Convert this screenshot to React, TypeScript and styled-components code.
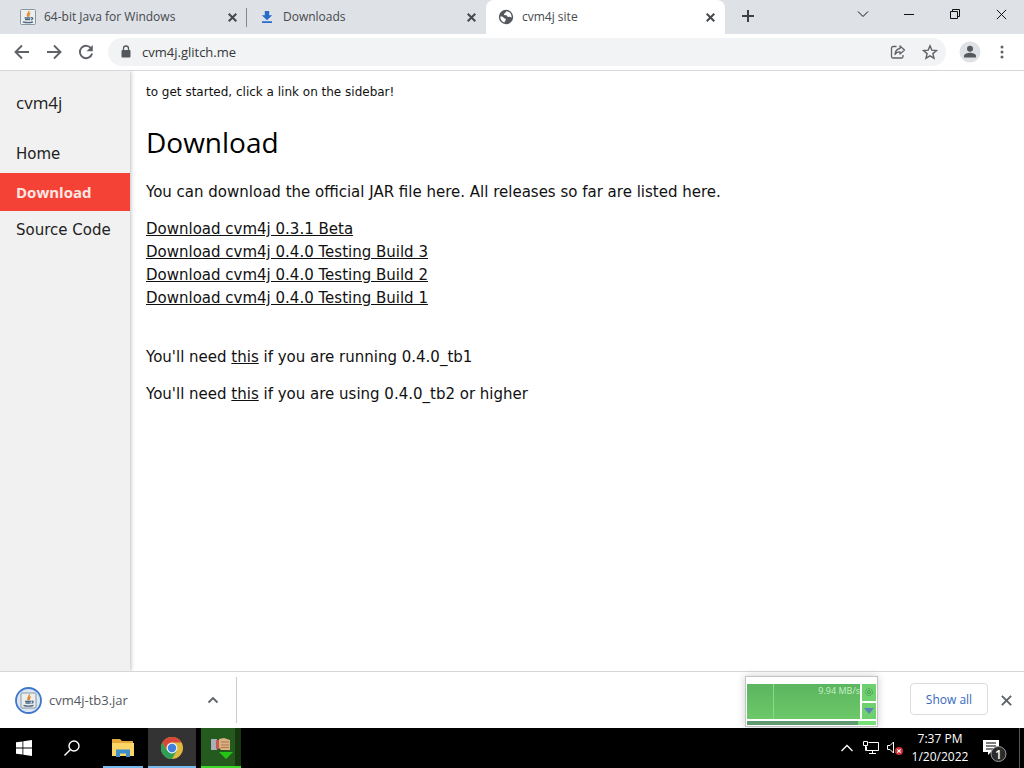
import React from 'react';
import styled, { createGlobalStyle } from 'styled-components';

const UI = '"Open Sans", "Noto Sans", sans-serif';
const VERDANA = 'Verdana, "DejaVu Sans", sans-serif';

const Global = createGlobalStyle`
  * { box-sizing: border-box; }
  body { margin: 0; background: #fff; font-family: ${UI}; }
  button { border: 0; padding: 0; background: none; font-family: inherit; cursor: pointer; }
  svg { display: block; flex: none; }
`;

const Screen = styled.div`
  min-height: 100vh;
  display: flex;
  flex-direction: column;
`;

const TabStrip = styled.header`
  display: flex;
  align-items: stretch;
  height: 34px;
  padding-left: 8px;
  background: #dee1e6;
`;

const Tab = styled.div<{ $active?: boolean; $divider?: boolean }>`
  position: relative;
  flex: 0 1 239px;
  min-width: 0;
  display: flex;
  align-items: center;
  gap: 8px;
  padding: 0 10px 0 12px;
  border-radius: 8px 8px 0 0;
  background: ${(p) => (p.$active ? '#fff' : 'transparent')};
  ${(p) => p.$divider && `&::after {
    content: '';
    position: absolute;
    right: 0;
    top: 8px;
    width: 1px;
    height: 19px;
    background: #84878c;
  }`}
`;

const TabTitle = styled.span`
  flex: 1;
  min-width: 0;
  overflow: hidden;
  white-space: nowrap;
  font-size: 12px;
  line-height: 20px;
  color: #45494d;
`;

const IconButton = styled.button<{ $w?: number; $h?: number }>`
  flex: none;
  display: flex;
  align-items: center;
  justify-content: center;
  width: ${(p) => p.$w ?? 32}px;
  height: ${(p) => p.$h ?? 32}px;
  color: #5f6368;
`;

const TabClose = styled(IconButton)`
  color: #45494d;
`;

const NewTab = styled(IconButton)`
  margin-left: 7px;
  color: #3c4043;
`;

const WindowControls = styled.div`
  display: flex;
  margin-left: auto;
  button { color: #111; }
`;

const Toolbar = styled.div`
  display: flex;
  align-items: center;
  height: 37px;
  padding: 0 6px;
  background: #fff;
  border-bottom: 1px solid #d5d7da;
`;

const AddressBar = styled.div`
  flex: 1;
  min-width: 0;
  display: flex;
  align-items: center;
  height: 28px;
  margin: 0 8px 0 6px;
  padding-left: 13px;
  border-radius: 14px;
  background: #f1f3f4;
`;

const Address = styled.input`
  flex: 1;
  min-width: 0;
  margin-left: 11px;
  padding: 0;
  border: 0;
  outline: 0;
  background: none;
  font: 13px/20px ${UI};
  color: #35383b;
`;

const Viewport = styled.div`
  flex: 1;
  display: flex;
  background: #fff;
`;

const Sidebar = styled.nav`
  flex: none;
  width: 130px;
  background: #f1f1f1;
  box-shadow: 1px 0 4px rgba(0, 0, 0, 0.25);
  clip-path: inset(0 -8px 0 0);
`;

const SiteName = styled.h4`
  margin: 0;
  padding: 17px 16px 18px;
  font: 400 17px/29px ${UI};
  color: #222;
`;

const SideLink = styled.a<{ $active?: boolean }>`
  display: block;
  padding: 8px 16px;
  font-family: ${(p) => (p.$active ? UI : VERDANA)};
  font-size: 15px;
  font-weight: ${(p) => (p.$active ? 700 : 400)};
  line-height: 22px;
  white-space: nowrap;
  text-decoration: none;
  color: ${(p) => (p.$active ? '#ffe6e3' : '#222')};
  background: ${(p) => (p.$active ? '#f44336' : 'transparent')};
`;

const Content = styled.main`
  flex: 1;
  min-width: 0;
  padding: 10px 16px;
  font: 15px/23px ${VERDANA};
  color: #111;
  p { margin: 0 0 14px; }
  a { color: inherit; }
`;

const Hint = styled.div`
  font-size: 12px;
  line-height: 22px;
`;

const Title = styled.h2`
  margin: 17px 0 16px;
  font: 400 28px/45px ${UI};
  color: #000;
`;

const Releases = styled.div`
  display: flex;
  flex-direction: column;
  align-items: flex-start;
  margin-bottom: 36px;
`;

const Shelf = styled.footer`
  position: relative;
  display: flex;
  align-items: center;
  height: 57px;
  padding-right: 2px;
  background: #fff;
  border-top: 1px solid #d5d7da;
`;

const DownloadItem = styled.div`
  flex: 0 1 237px;
  display: flex;
  align-items: center;
  height: 46px;
  padding: 0 7px 0 15px;
  border-right: 1px solid #c8cacd;
`;

const FileName = styled.span`
  flex: 1;
  margin-left: 7px;
  font-size: 13px;
  line-height: 20px;
  color: #55595d;
`;

const ShowAll = styled.button`
  width: 78px;
  height: 32px;
  margin: 0 2px 2px auto;
  border: 1px solid #dadce0;
  border-radius: 4px;
  font-size: 12px;
  font-weight: 500;
  color: #3567bd;
`;

const Meter = styled.div`
  position: absolute;
  right: 146px;
  top: 4px;
  width: 133px;
  height: 51px;
  padding: 7px 1px 1px;
  display: grid;
  grid-template: 35px 4px / 1fr 14px;
  gap: 2px;
  background: #fff;
  border: 1px solid #c4c4c4;
  box-shadow: 0 0 8px rgba(0, 0, 0, 0.2);
`;

const Graph = styled.div`
  padding-left: 26px;
  background: linear-gradient(#5cb560, #6cc868);
  span {
    display: block;
    height: 35px;
    border-left: 1px solid #8fd78c;
    font-size: 9px;
    line-height: 13px;
    text-align: right;
    white-space: nowrap;
    color: #c9f0c6;
  }
`;

const MeterButtons = styled.div`
  display: grid;
  grid-template-rows: 1fr 1fr;
  gap: 2px;
  button {
    display: flex;
    align-items: center;
    justify-content: center;
    background: #6fd070;
  }
`;

const MeterTrack = styled.div`
  grid-column: 1 / 3;
  background: linear-gradient(90deg, #5f9a70 86%, #77e077 86%);
`;

const Taskbar = styled.div`
  display: flex;
  align-items: stretch;
  height: 40px;
  background: #000;
`;

const Task = styled.button<{ $bg?: string; $line?: string; $gap?: number }>`
  flex: none;
  display: flex;
  align-items: center;
  justify-content: center;
  width: ${(p) => (p.$line ? 40 : 48)}px;
  margin-left: ${(p) => p.$gap ?? 0}px;
  background: ${(p) => p.$bg ?? 'transparent'};
  box-shadow: inset 0 -2px ${(p) => p.$line ?? 'transparent'};
`;

const WideTask = styled(Task)`
  width: 48px;
`;

const Tray = styled.div`
  display: flex;
  align-items: center;
  margin-left: auto;
  color: #fff;
  button { color: #fff; }
`;

const Clock = styled.time`
  width: 66px;
  margin-right: 1px;
  font-size: 12px;
  line-height: 18px;
  text-align: center;
  white-space: nowrap;
`;

const ShowDesktop = styled.button`
  width: 5px;
  height: 40px;
  margin-left: 3px;
  border-left: 1px solid #555;
`;

const Cross = ({ s = 9, w = 2 }: { s?: number; w?: number }) => (
  <svg width={s} height={s} viewBox="0 0 10 10" stroke="currentColor" strokeWidth={(w * 10) / s}>
    <path d="M.8.8l8.4 8.4M9.2.8L.8 9.2" />
  </svg>
);

const JavaArt = () => (
  <>
    <rect x=".5" y=".5" width="15" height="15" rx="1" fill="#eceded" stroke="#8b979f" />
    <path d="M8.800 2c1 2-3.200 2.600-.8 5.800M10.300 4.200C8 5.300 8.800 6.200 9 7.600" fill="none" stroke="#e0892f" strokeWidth="1.400" />
    <path d="M4.500 8.800h6M5 10.500h5M3 12.800c3 1 7 1 10 0M11 8.800c2.500-.5 2 1.700 0 2" fill="none" stroke="#456886" strokeWidth="1.300" />
  </>
);

const App = () => (
  <>
    <Global />
    <Screen>
      <TabStrip>
        <Tab $divider>
          <svg width="16" height="16" viewBox="0 0 16 16"><JavaArt /></svg>
          <TabTitle>64-bit Java for Windows</TabTitle>
          <TabClose $w={10} $h={16} aria-label="Close tab"><Cross /></TabClose>
        </Tab>
        <Tab>
          <svg width="16" height="16" viewBox="0 0 16 16" fill="#2a6bcb">
            <path d="M5.800 2h4.400v4.200h3L8 11.300 2.800 6.200h3zM3 12.300h10v1.800H3z" />
          </svg>
          <TabTitle>Downloads</TabTitle>
          <TabClose $w={10} $h={16} aria-label="Close tab"><Cross /></TabClose>
        </Tab>
        <Tab $active>
          <svg width="16" height="16" viewBox="0 0 16 16">
            <circle cx="8" cy="8" r="7.200" fill="#55595d" />
            <path d="M8.500 2.200c-1.500 1-.5 1.600-2 2.300s.2 1.800 1.500 1.700 1 2 2.700 1.700 1.800.7 2.900.5c.3-3-2-6-5.100-6.200zM2.300 7.500c2 .2 2.800 0 3.300 1.200s2.200.3 2.300 1.700-1.200 1.300-1.400 3C3.800 13 2.100 10.500 2.300 7.500z" fill="#fff" />
          </svg>
          <TabTitle>cvm4j site</TabTitle>
          <TabClose $w={10} $h={16} aria-label="Close tab"><Cross /></TabClose>
        </Tab>
        <NewTab aria-label="New tab">
          <svg width="12" height="12" viewBox="0 0 12 12" stroke="currentColor" strokeWidth="2"><path d="M6 0v12M0 6h12" /></svg>
        </NewTab>
        <WindowControls>
          <IconButton $w={46} $h={28} aria-label="Search tabs">
            <svg width="12" height="12" viewBox="0 0 12 12" fill="none" stroke="currentColor"><path d="M1 3.500l5 5 5-5" /></svg>
          </IconButton>
          <IconButton $w={46} $h={28} aria-label="Minimize">
            <svg width="10" height="10" viewBox="0 0 10 10" stroke="currentColor"><path d="M0 5.500h10" /></svg>
          </IconButton>
          <IconButton $w={46} $h={28} aria-label="Restore">
            <svg width="10" height="10" viewBox="0 0 10 10" fill="none" stroke="currentColor"><path d="M.5 2.500h7v7h-7zM2.500 2.500v-2h7v7h-2" /></svg>
          </IconButton>
          <IconButton $w={46} $h={28} aria-label="Close window"><Cross s={11} w={1} /></IconButton>
        </WindowControls>
      </TabStrip>

      <Toolbar>
        <IconButton aria-label="Back">
          <svg width="16" height="16" viewBox="0 0 16 16" fill="none" stroke="currentColor" strokeWidth="1.900"><path d="M15 8H2M8 1.500L1.500 8 8 14.500" /></svg>
        </IconButton>
        <IconButton aria-label="Forward">
          <svg width="16" height="16" viewBox="0 0 16 16" fill="none" stroke="currentColor" strokeWidth="1.900"><path d="M1 8h13M8 1.500L14.500 8 8 14.500" /></svg>
        </IconButton>
        <IconButton aria-label="Reload">
          <svg width="16" height="16" viewBox="0 0 16 16"><path d="M13.400 4.800A6.200 6.200 0 1 0 14.100 9.500" fill="none" stroke="currentColor" strokeWidth="1.900" /><path d="M14.800 1v6.200H8.600z" fill="currentColor" /></svg>
        </IconButton>
        <AddressBar>
          <svg width="10" height="14" viewBox="0 0 10 14"><path d="M2.500 6V3.500a2.500 2.500 0 0 1 5 0V6" fill="none" stroke="#55595d" strokeWidth="1.300" /><rect x=".5" y="5" width="9" height="7.500" rx="1" fill="#55595d" /></svg>
          <Address aria-label="Address" defaultValue="cvm4j.glitch.me" />
          <IconButton aria-label="Share">
            <svg width="16" height="16" viewBox="0 0 16 16" fill="none" stroke="currentColor" strokeWidth="1.300">
              <path d="M6.500 2.500H3A1.500 1.500 0 0 0 1.500 4v8.500A1.500 1.500 0 0 0 3 14h8.500a1.500 1.500 0 0 0 1.500-1.500V11" />
              <path d="M10 2l4.500 4L10 10V7.800c-2.500 0-4 .7-5 2.700.3-3.500 2-5.500 5-6z" strokeLinejoin="round" />
            </svg>
          </IconButton>
          <IconButton aria-label="Bookmark">
            <svg width="16" height="16" viewBox="0 0 16 16" fill="none" stroke="currentColor" strokeWidth="1.400"><path d="M8 1.800l1.800 4.300 4.700.4-3.600 3.100 1.100 4.600L8 11.800l-4 2.400 1.100-4.600-3.600-3.100 4.700-.4z" /></svg>
          </IconButton>
        </AddressBar>
        <IconButton $w={32} aria-label="Profile">
          <svg width="22" height="22" viewBox="0 0 22 22"><circle cx="11" cy="11" r="10.500" fill="#dee1e6" /><circle cx="11" cy="7.800" r="3" fill="#55595d" /><path d="M5 16.500v-1.700c0-2 4-3 6-3s6 1 6 3v1.700z" fill="#55595d" /></svg>
        </IconButton>
        <IconButton aria-label="Menu">
          <svg width="4" height="14" viewBox="0 0 4 14" fill="currentColor"><circle cx="2" cy="2" r="1.500" /><circle cx="2" cy="7" r="1.500" /><circle cx="2" cy="12" r="1.500" /></svg>
        </IconButton>
      </Toolbar>

      <Viewport>
        <Sidebar>
          <SiteName>cvm4j</SiteName>
          <SideLink href="#home">Home</SideLink>
          <SideLink href="#download" $active>Download</SideLink>
          <SideLink href="#source">Source Code</SideLink>
        </Sidebar>
        <Content>
          <Hint>to get started, click a link on the sidebar!</Hint>
          <Title>Download</Title>
          <p>You can download the official JAR file here. All releases so far are listed here.</p>
          <Releases>
            <a href="#031">Download cvm4j 0.3.1 Beta</a>
            <a href="#tb3">Download cvm4j 0.4.0 Testing Build 3</a>
            <a href="#tb2">Download cvm4j 0.4.0 Testing Build 2</a>
            <a href="#tb1">Download cvm4j 0.4.0 Testing Build 1</a>
          </Releases>
          <p>You'll need <a href="#lib1">this</a> if you are running 0.4.0_tb1</p>
          <p>You'll need <a href="#lib2">this</a> if you are using 0.4.0_tb2 or higher</p>
        </Content>
      </Viewport>

      <Shelf>
        <DownloadItem>
          <svg width="27" height="27" viewBox="0 0 27 27">
            <circle cx="13.500" cy="13.500" r="12.500" fill="#d9e6f6" stroke="#3f76c9" strokeWidth="1.800" />
            <g transform="translate(5.500 5.500)"><JavaArt /></g>
          </svg>
          <FileName>cvm4j-tb3.jar</FileName>
          <IconButton aria-label="Download options">
            <svg width="12" height="8" viewBox="0 0 12 8" fill="none" stroke="currentColor" strokeWidth="1.800"><path d="M1.500 6.500L6 2l4.500 4.500" /></svg>
          </IconButton>
        </DownloadItem>
        <ShowAll>Show all</ShowAll>
        <IconButton aria-label="Close downloads bar"><Cross s={11} w={2} /></IconButton>
        <Meter>
          <Graph><span>9.94 MB/s</span></Graph>
          <MeterButtons>
            <button aria-label="Settings"><svg width="10" height="12" viewBox="0 0 10 12" fill="none" stroke="#4c9d55"><circle cx="5" cy="6" r="3.500" strokeDasharray="2 1" /><circle cx="5" cy="6" r="1.500" /></svg></button>
            <button aria-label="Collapse"><svg width="10" height="6" viewBox="0 0 10 6"><path d="M0 0h10L5 6z" fill="#5b83b5" /></svg></button>
          </MeterButtons>
          <MeterTrack />
        </Meter>
      </Shelf>

      <Taskbar>
        <Task aria-label="Start">
          <svg width="16" height="16" viewBox="0 0 16 16" fill="#fff"><path d="M0 2.300L6.500 1.400v6.200H0zM7.300 1.300L16 0v7.600H7.300zM0 8.400h6.500v6.200L0 13.700zM7.300 8.400H16V16l-8.700-1.300z" /></svg>
        </Task>
        <Task aria-label="Search">
          <svg width="16" height="16" viewBox="0 0 16 16" fill="none" stroke="#fff" strokeWidth="1.400"><circle cx="10" cy="6" r="5" /><path d="M6.300 9.700L.5 15.500" /></svg>
        </Task>
        <Task $line="#76b9ed" $gap={7} aria-label="File Explorer">
          <svg width="22" height="20" viewBox="0 0 22 20">
            <path d="M0 1h8l2 2h11v6H0z" fill="#e5a93a" /><path d="M0 5h22v13H0z" fill="#fbd667" />
            <path d="M4 19v-7.500h14V19h-4v-3.500H8V19z" fill="#3d8ec9" />
          </svg>
        </Task>
        <WideTask $line="#76b9ed" $bg="#333" $gap={5} aria-label="Chrome">
          <svg width="24" height="24" viewBox="0 0 24 24">
            <circle cx="12" cy="12" r="11" fill="#e0b93c" />
            <path d="M2.470 6.500A11 11 0 0 0 12 23l4.700-8.200L12 12 7.300 14.800z" fill="#2f9e57" />
            <path d="M2.470 6.500A11 11 0 0 1 21.530 6.500H12a5.500 5.500 0 0 0-4.700 8.200z" fill="#d9473a" />
            <circle cx="12" cy="12" r="5.400" fill="#eef1f5" /><circle cx="12" cy="12" r="4.200" fill="#3f7fe0" />
          </svg>
        </WideTask>
        <Task $line="#3fd92b" $bg="linear-gradient(90deg, #245a1e 34px, #17380f 34px)" $gap={5} aria-label="Download manager">
          <svg width="24" height="24" viewBox="0 0 24 24">
            <path d="M2 3h6v11H2z" fill="#a9aeb8" /><path d="M7 4h4v9H7z" fill="#c45c4c" /><path d="M10 3l5-1 6 2v10h-9l-2-3z" fill="#dbb184" />
            <path d="M12 6h8M12 9h8M12 11.500h8" stroke="#a8794f" /><path d="M10 16h14l-7 7z" fill="#25c414" />
          </svg>
        </Task>
        <Tray>
          <IconButton $w={24} aria-label="Hidden icons">
            <svg width="12" height="8" viewBox="0 0 12 8" fill="none" stroke="currentColor" strokeWidth="1.300"><path d="M.5 7L6 1.500 11.500 7" /></svg>
          </IconButton>
          <IconButton $w={24} aria-label="Network">
            <svg width="16" height="14" viewBox="0 0 16 14" fill="none" stroke="currentColor"><path d="M5.500 1.500h10v8h-12v-4M9.500 9.500v3M6 12.500h7M.5.500h4v4h-4zM2.500 4.500v5h1" /></svg>
          </IconButton>
          <IconButton $w={24} aria-label="Volume muted">
            <svg width="16" height="16" viewBox="0 0 16 16"><path d="M.5 5.500H3L6.500 2v11L3 9.500H.5z" fill="none" stroke="currentColor" /><circle cx="12" cy="11" r="4" fill="#d12f35" /><path d="M10.300 9.300l3.400 3.400M13.700 9.300l-3.400 3.400" stroke="#fff" strokeWidth="1.200" /></svg>
          </IconButton>
          <Clock>7:37 PM<br />1/20/2022</Clock>
          <IconButton $w={42} $h={40} aria-label="Notifications">
            <svg width="24" height="28" viewBox="0 -4 24 28">
              <path d="M0 2h16v12H8l-3 3v-3H0z" fill="#fff" /><path d="M3 5h10M3 8h10M3 11h7" stroke="#000" />
              <circle cx="15.500" cy="16" r="7.500" fill="#2b2b2b" stroke="#999" /><text x="15.500" y="20.500" textAnchor="middle" fontSize="12" fontWeight="600" fill="#fff">1</text>
            </svg>
          </IconButton>
          <ShowDesktop aria-label="Show desktop" />
        </Tray>
      </Taskbar>
    </Screen>
  </>
);

export default App;
